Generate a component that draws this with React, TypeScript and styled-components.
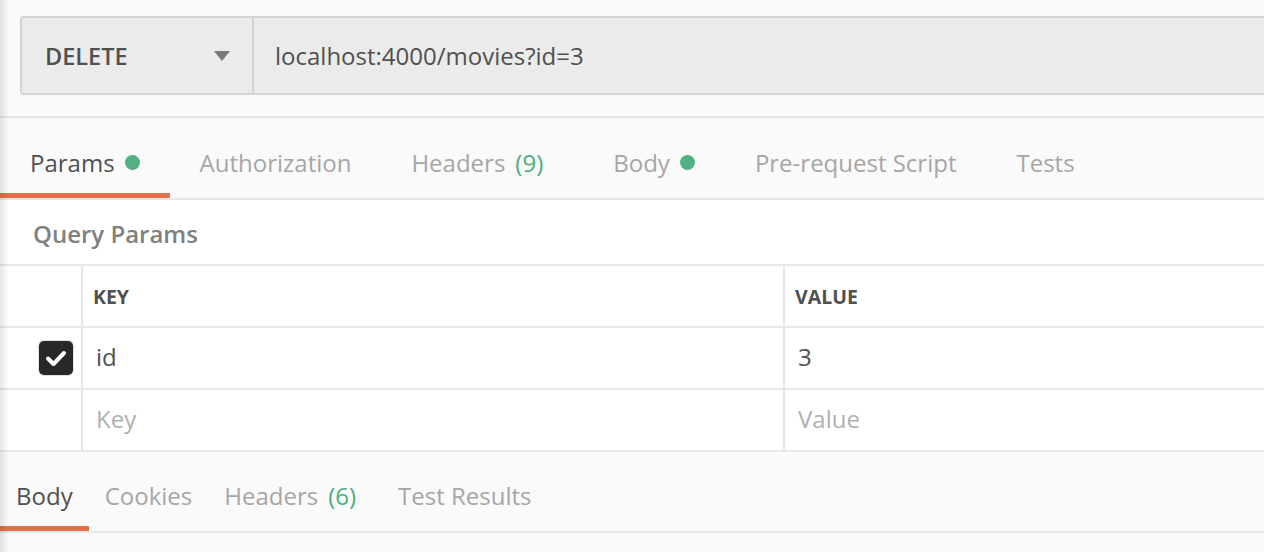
import styled, { createGlobalStyle } from "styled-components";

const GlobalStyle = createGlobalStyle`
  html, body {
    margin: 0;
    padding: 0;
    background: #fafafa;
  }
  body {
    font-family: "Open Sans", "Noto Sans", sans-serif;
    color: #505050;
  }
  * {
    box-sizing: border-box;
  }
`;

const Page = styled.div`
  position: relative;
  width: 1264px;
  height: 552px;
  overflow: hidden;
  background: #fafafa;

  &::before {
    content: "";
    position: absolute;
    left: 0;
    top: 0;
    bottom: 0;
    width: 9px;
    background: linear-gradient(to right, rgba(0, 0, 0, 0.1), rgba(0, 0, 0, 0));
    pointer-events: none;
    z-index: 5;
  }
`;

// Request bar
const RequestArea = styled.div`
  padding: 16px 0 21px 20px;
  border-bottom: 2px solid #e6e6e6;
`;

const UrlBox = styled.div`
  display: flex;
  height: 79px;
  background: #ebebeb;
  border: 2px solid #d4d4d4;
  border-right: none;
  border-radius: 4px 0 0 4px;
`;

const MethodSelect = styled.div`
  display: flex;
  align-items: center;
  justify-content: space-between;
  width: 232px;
  padding: 0 22px 0 23px;
  border-right: 2px solid #d4d4d4;
  font-size: 23.5px;
  font-weight: 600;
  color: #505050;
`;

const Caret = styled.span`
  width: 0;
  height: 0;
  border-left: 8px solid transparent;
  border-right: 8px solid transparent;
  border-top: 10px solid #7a7a7a;
`;

const UrlText = styled.div`
  display: flex;
  align-items: center;
  padding-left: 21px;
  font-size: 24px;
  color: #505050;
`;

// Tabs
const TabBar = styled.div<{ $height: number }>`
  display: flex;
  height: ${p => p.$height}px;
  background: #fafafa;
  border-bottom: 2px solid #e6e6e6;
`;

const Tab = styled.div<{ $active?: boolean; $pad: number }>`
  position: relative;
  display: flex;
  align-items: center;
  padding: 8px ${p => p.$pad}px 0;
  font-size: 24px;
  color: ${p => (p.$active ? "#505050" : "#a6a6a6")};
  white-space: nowrap;

  &::after {
    content: "";
    display: ${p => (p.$active ? "block" : "none")};
    position: absolute;
    left: 0;
    right: 0;
    bottom: 0;
    height: 5px;
    background: #e2704a;
  }
`;

const Dot = styled.span`
  width: 15px;
  height: 15px;
  margin-left: 10px;
  border-radius: 50%;
  background: #52b081;
`;

const Count = styled.span`
  margin-left: 10px;
  margin-right: 10px;
  color: #4caf7e;
`;

// Params table
const Section = styled.div`
  background: #ffffff;
`;

const SectionTitle = styled.div`
  display: flex;
  align-items: center;
  height: 64px;
  padding: 2px 0 0 33px;
  font-size: 24px;
  font-weight: 600;
  color: #808080;
`;

const Row = styled.div`
  display: grid;
  grid-template-columns: 81px 702px 1fr;
  height: 62px;
  border-top: 2px solid #e8e8e8;
`;

const Cell = styled.div<{ $header?: boolean; $placeholder?: boolean }>`
  display: flex;
  align-items: center;
  padding: 0 0 ${p => (p.$header ? 0 : 3)}px ${p => (p.$header ? 10 : 13)}px;
  border-left: 2px solid #e8e8e8;
  font-size: ${p => (p.$header ? "19.5px" : "24px")};
  font-weight: ${p => (p.$header ? 700 : 400)};
  color: ${p => (p.$placeholder ? "#b0b0b0" : "#505050")};

  &:first-child {
    border-left: none;
    justify-content: flex-end;
    padding: 0 8px 0 0;
  }
`;

const Checkbox = styled.span`
  display: flex;
  align-items: center;
  justify-content: center;
  width: 34px;
  height: 34px;
  border-radius: 5px;
  background: #282828;
  box-shadow: 0 0 0 1px #e0e0e0;
`;

const BottomArea = styled.div`
  border-top: 2px solid #e8e8e8;
`;

const CheckIcon = () => (
  <svg width="22" height="18" viewBox="0 0 22 18" fill="none">
    <path d="M3 9.5l5.5 5.5L19 4" stroke="#ffffff" strokeWidth="4" strokeLinecap="round" strokeLinejoin="round" />
  </svg>
);

const App = () => (
  <>
    <GlobalStyle />
    <Page>
      <RequestArea>
        <UrlBox>
          <MethodSelect>
            DELETE
            <Caret />
          </MethodSelect>
          <UrlText>localhost:4000/movies?id=3</UrlText>
        </UrlBox>
      </RequestArea>

      <TabBar $height={82}>
        <Tab $active $pad={30}>
          Params<Dot />
        </Tab>
        <Tab $pad={30}>Authorization</Tab>
        <Tab $pad={30}>
          Headers<Count>(9)</Count>
        </Tab>
        <Tab $pad={30}>
          Body<Dot />
        </Tab>
        <Tab $pad={30}>Pre-request Script</Tab>
        <Tab $pad={30}>Tests</Tab>
      </TabBar>

      <Section>
        <SectionTitle>Query Params</SectionTitle>
        <Row>
          <Cell />
          <Cell $header>KEY</Cell>
          <Cell $header>VALUE</Cell>
        </Row>
        <Row>
          <Cell>
            <Checkbox>
              <CheckIcon />
            </Checkbox>
          </Cell>
          <Cell>id</Cell>
          <Cell>3</Cell>
        </Row>
        <Row>
          <Cell />
          <Cell $placeholder>Key</Cell>
          <Cell $placeholder>Value</Cell>
        </Row>
      </Section>

      <BottomArea>
        <TabBar $height={81}>
          <Tab $active $pad={16}>Body</Tab>
          <Tab $pad={16}>Cookies</Tab>
          <Tab $pad={16}>
            Headers<Count>(6)</Count>
          </Tab>
          <Tab $pad={16}>Test Results</Tab>
        </TabBar>
      </BottomArea>
      <Section />
    </Page>
  </>
);

export default App;
